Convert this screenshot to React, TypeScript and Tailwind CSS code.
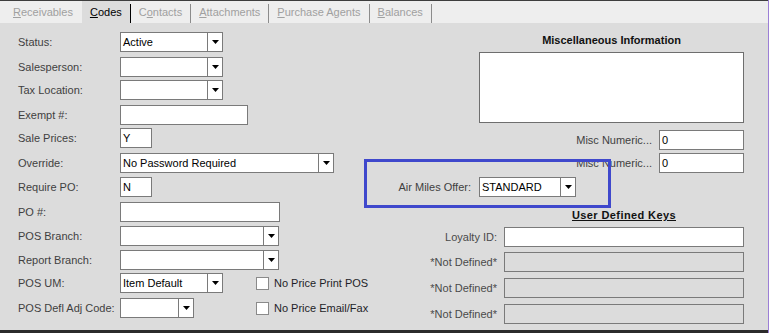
import React from 'react';

const font = { fontFamily: '"Liberation Sans", Arial, sans-serif' };

function Arrow() {
  return (
    <svg width="7" height="4" viewBox="0 0 7 4">
      <path d="M0 0h7L3.5 4z" fill="#000" />
    </svg>
  );
}

function Combo({ w, value }: { w: string; value?: string }) {
  return (
    <div className={`${w} shrink-0 h-[20px] flex bg-white border border-[#7a7a7a]`}>
      <div className="flex-1 pl-[2px] leading-[18px] text-black truncate">{value}</div>
      <div className="w-[15px] border-l border-[#7a7a7a] flex items-center justify-center">
        <Arrow />
      </div>
    </div>
  );
}

function TextBox({ w, value, disabled }: { w: string; value?: string; disabled?: boolean }) {
  return (
    <div
      className={`${w} shrink-0 h-[20px] pl-[2px] leading-[18px] text-black border border-[#7a7a7a] ${
        disabled ? 'bg-[#dcdcdc]' : 'bg-white'
      }`}
    >
      {value}
    </div>
  );
}

function Row({ label, mt, children }: { label: string; mt: string; children: React.ReactNode }) {
  return (
    <div className={`flex items-center h-[20px] ${mt}`}>
      <div className="w-[102px] shrink-0 text-[#3f3f3f] whitespace-nowrap">{label}</div>
      {children}
    </div>
  );
}

function Check({ label }: { label: string }) {
  return (
    <div className="flex items-center gap-[5px] whitespace-nowrap">
      <div className="w-[13px] h-[13px] bg-white border border-[#8a8a8a]" />
      <span className="text-[#1e1e28]">{label}</span>
    </div>
  );
}

function Tab({ k, rest, pre, active }: { k: string; rest: string; pre?: string; active?: boolean }) {
  return (
    <div
      className={`h-full flex items-center pt-px px-[8px] ${
        active ? 'bg-[#dcdcdc] text-black' : 'text-[#a0a0a0]'
      }`}
    >
      {pre}
      <span className="underline underline-offset-[1px]">{k}</span>
      {rest}
    </div>
  );
}

function Sep({ dark }: { dark?: boolean }) {
  return <div className={`w-px h-[19px] self-end ${dark ? 'bg-black' : 'bg-[#8c8c8c]'}`} />;
}

function KeyRow({ label, mt, disabled }: { label: string; mt: string; disabled?: boolean }) {
  return (
    <div className={`${mt} flex items-center justify-end gap-[7px]`}>
      <span className="text-[#4a4a4a] whitespace-nowrap">{label}</span>
      <TextBox w="w-[240px]" disabled={disabled} />
    </div>
  );
}

export default function App() {
  return (
    <div
      className="relative w-[769px] h-[333px] text-[11px] bg-[#dcdcdc] border-r border-[#9c7fd6] overflow-hidden"
      style={font}
    >
      <div className="h-px bg-[#3d3d3d]" />
      {/* tabs */}
      <div className="h-[22px] bg-[#eeeeee] flex pl-[5px]">
        <div className="h-full flex items-center pt-px pl-[8px] pr-[9px] text-[#a0a0a0]">
          <span className="underline underline-offset-[1px]">R</span>eceivables
        </div>
        <Tab k="C" rest="odes" active />
        <Sep dark />
        <Tab pre="C" k="o" rest="ntacts" />
        <Sep />
        <Tab k="A" rest="ttachments" />
        <Sep />
        <Tab k="P" rest="urchase Agents" />
        <Sep />
        <Tab k="B" rest="alances" />
        <Sep />
      </div>

      {/* body */}
      <div className="h-[307px] flex pl-[18px] pr-[24px]">
        <div className="flex flex-col pt-[9px] shrink-0">
          <Row label="Status:" mt="mt-0">
            <Combo w="w-[103px]" value="Active" />
          </Row>
          <Row label="Salesperson:" mt="mt-[5px]">
            <Combo w="w-[103px]" />
          </Row>
          <Row label="Tax Location:" mt="mt-[3px]">
            <Combo w="w-[103px]" />
          </Row>
          <Row label="Exempt #:" mt="mt-[5px]">
            <TextBox w="w-[128px]" />
          </Row>
          <Row label="Sale Prices:" mt="mt-[3px]">
            <TextBox w="w-[32px]" value="Y" />
          </Row>
          <Row label="Override:" mt="mt-[5px]">
            <Combo w="w-[214px]" value="No Password Required" />
          </Row>
          <Row label="Require PO:" mt="mt-[4px]">
            <TextBox w="w-[32px]" value="N" />
          </Row>
          <Row label="PO #:" mt="mt-[5px]">
            <TextBox w="w-[160px]" />
          </Row>
          <Row label="POS Branch:" mt="mt-[4px]">
            <Combo w="w-[159px]" />
          </Row>
          <Row label="Report Branch:" mt="mt-[4px]">
            <Combo w="w-[159px]" />
          </Row>
          <Row label="POS UM:" mt="mt-[3px]">
            <div className="w-[136px] shrink-0">
              <Combo w="w-[103px]" value="Item Default" />
            </div>
            <Check label="No Price Print POS" />
          </Row>
          <Row label="POS Defl Adj Code:" mt="mt-[5px]">
            <div className="w-[136px] shrink-0">
              <Combo w="w-[74px]" />
            </div>
            <Check label="No Price Email/Fax" />
          </Row>
        </div>

        <div className="ml-auto w-[345px] shrink-0 flex flex-col">
          <div className="mt-[10px] h-[14px] leading-[14px] ml-[80px] text-center font-bold text-[#111]">
            Miscellaneous Information
          </div>
          <div className="mt-[5px] ml-[80px] h-[71px] bg-white border border-[#6e6e6e]" />
          <div className="mt-[7px] flex items-center justify-end gap-[7px]">
            <span className="text-[#3f3f3f]">Misc Numeric...</span>
            <TextBox w="w-[85px]" value="0" />
          </div>
          <div className="mt-[3px] flex items-center justify-end gap-[7px]">
            <span className="text-[#3f3f3f]">Misc Numeric...</span>
            <TextBox w="w-[85px]" value="0" />
          </div>
          <div className="mt-[4px] flex items-center justify-end">
            <span className="text-[#3f3f3f] whitespace-nowrap">Air Miles Offer:</span>
            <div className="ml-[8px] mr-[168px]">
              <Combo w="w-[97px]" value="STANDARD" />
            </div>
          </div>
          <div className="mt-[11px] h-[14px] leading-[14px] ml-[105px] text-center font-bold text-[#111] underline underline-offset-[1px] tracking-[0.4px]">
            User Defined Keys
          </div>
          <KeyRow label="Loyalty ID:" mt="mt-[5px]" />
          <KeyRow label="*Not Defined*" mt="mt-[5px]" disabled />
          <KeyRow label="*Not Defined*" mt="mt-[6px]" disabled />
          <KeyRow label="*Not Defined*" mt="mt-[6px]" disabled />
        </div>
      </div>
      <div className="h-[3px] bg-[#2b2b2b]" />

      {/* highlight annotation */}
      <div className="absolute left-[364px] top-[159px] w-[247px] h-[49px] border-[3px] border-[#3f48cc] pointer-events-none" />
    </div>
  );
}
